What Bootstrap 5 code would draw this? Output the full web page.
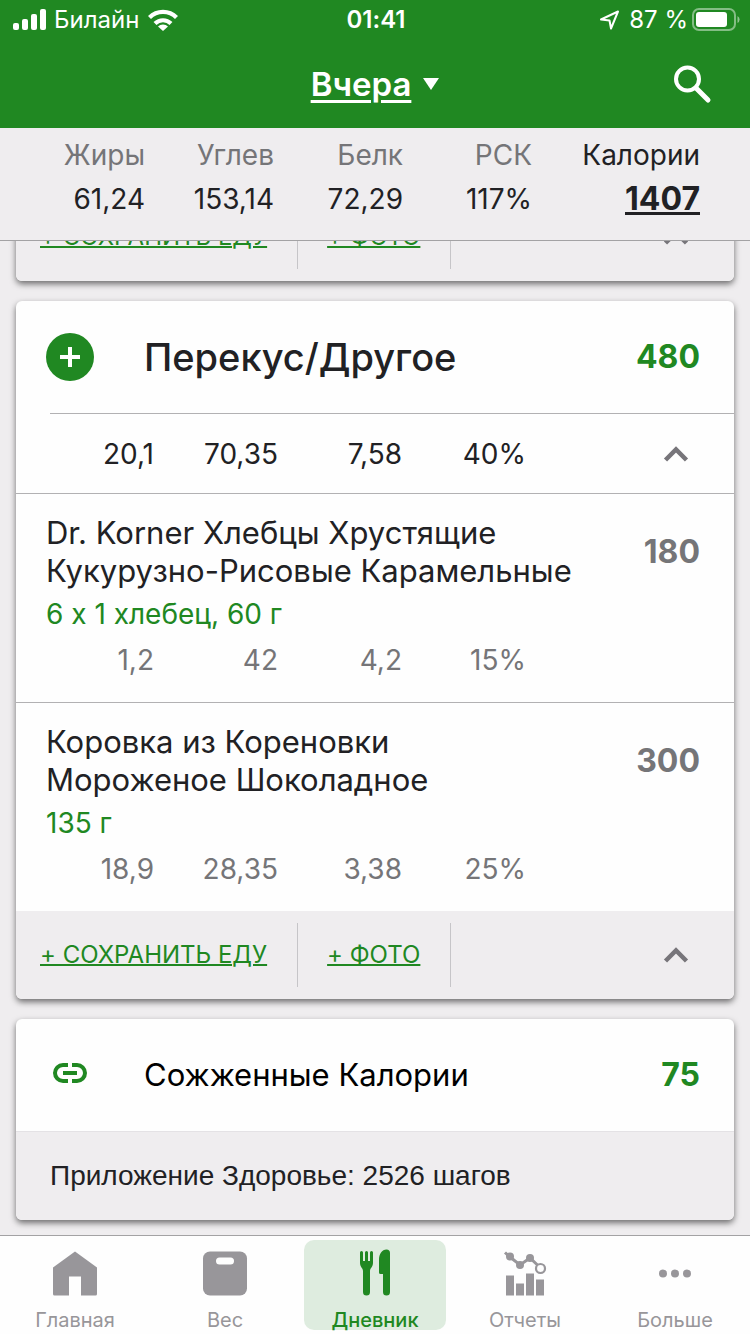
<!DOCTYPE html>
<html lang="ru">
<head>
<meta charset="utf-8">
<meta name="viewport" content="width=device-width, initial-scale=1">
<title>Дневник питания</title>
<link href="https://cdn.jsdelivr.net/npm/bootstrap@5.3.0/dist/css/bootstrap.min.css" rel="stylesheet">
<style>
  :root { --green: #208822; --ink: #212124; --muted: #757578; --page: #efedef; --rule: #b2b1b3; }
  body { font-family: Inter, "Noto Sans", sans-serif; font-variant-ligatures: no-contextual; background: var(--page); color: var(--ink); font-size: 28px; line-height: 36px; }
  svg { display: block; flex: none; }
  .app-bar { background: var(--green); color: #fff; }
  .status { height: 40px; padding: 0 10px 0 12px; font-size: 24px; line-height: 40px; }
  .side { flex: 1 1 0; }
  .bar-row { display: grid; grid-template-columns: 1fr auto 1fr; height: 88px; padding: 0 34px; }
  .day-btn, .icon-btn { background: none; border: 0; padding: 0; color: inherit; }
  .day-btn { font-size: 33px; line-height: 44px; font-weight: 600; gap: 12px; }
  .day-btn span, .total a { text-decoration: underline; text-decoration-thickness: 3px; text-underline-offset: 4px; }
  .totals { padding: 5px 50px 19px 16px; border-bottom: 1px solid #a3a2a4; }
  .totals table { width: 100%; table-layout: fixed; border-collapse: collapse; }
  .totals th, .totals td { height: 44px; padding: 0; text-align: right; font-weight: 400; }
  .totals th { color: var(--muted); }
  .totals th.total { color: var(--ink); width: 168px; }
  .total a { color: inherit; font-weight: 700; font-size: 32px; text-underline-offset: 2px; }
  main { scrollbar-width: none; }
  .feed { padding: 0 16px 14px; margin-top: -48px; gap: 20px; }
  .meal { background: #fefefe; border-radius: 6px; box-shadow: 0 3px 6px rgba(0,0,0,.55); }
  .meal-head { height: 112px; padding: 0 34px 0 30px; }
  .lead-icon { width: 98px; }
  .meal-head h2 { font-size: 38px; line-height: 44px; font-weight: 500; margin: 0; }
  .meal-head h2.plain { font-size: 31px; font-weight: 400; color: #000; }
  .kcal { font-size: 32px; font-weight: 700; }
  .kcal-green { color: var(--green); }
  .inset-rule { border-top: 1px solid var(--rule); margin-left: 34px; }
  .macros { display: grid; grid-template-columns: repeat(4, 124fr) 174fr; padding: 0 34px 0 14px; text-align: right; align-items: center; }
  .macros.sum { height: 79px; padding-right: 40px; grid-template-columns: repeat(4, 124fr) 168fr; }
  .item { border-top: 1px solid var(--rule); padding: 20px 0 18px; }
  .item-top { padding: 0 34px 0 30px; }
  .item h3 { font-size: 31px; line-height: 38px; font-weight: 400; margin: 0; }
  .item .kcal, .item .macros { color: var(--muted); }
  .portion { color: var(--green); padding: 4px 30px 0; line-height: 40px; }
  .item .macros { height: 48px; margin-top: 2px; }
  .meal-foot { background: var(--page); border-radius: 0 0 6px 6px; height: 88px; padding: 12px 40px 12px 24px; }
  .meal-foot a { color: var(--green); font-size: 24px; text-decoration-thickness: 2px; }
  .foot-cell { border-right: 1px solid #c6c5c8; height: 64px; padding-right: 30px; }
  .foot-cell + .foot-cell { padding-left: 29px; }
  .fold { color: #77757a; width: 36px; height: 36px; }
  .meal-note { font-family: "Liberation Sans", sans-serif; background: var(--page); border-radius: 0 0 6px 6px; border-top: 1px solid #e4e2e5; height: 89px; padding: 0 34px; }
  .tabs { background: #fefefe; border-top: 1px solid #a3a2a4; height: 99px; padding: 4px 0; z-index: 1; }
  .tabs a { flex: 1 1 0; margin: 0 4px; color: #98969a; text-decoration: none; font-size: 20px; line-height: 24px; padding-top: 8px; border-radius: 10px; gap: 12px; }
  .tabs a.on { background: #deecdf; color: var(--green); font-weight: 500; }
</style>
</head>
<body>
<div class="vh-100 d-flex flex-column">
  <header>
    <div class="app-bar">
      <div class="status d-flex align-items-center">
        <div class="side d-flex align-items-center gap-2">
          <svg width="34" height="22" viewBox="0 0 34 22" fill="#fff"><rect x="1" y="14" width="6" height="7" rx="2"/><rect x="10" y="10" width="6" height="11" rx="2"/><rect x="19" y="5" width="6" height="16" rx="2"/><rect x="28" y="0" width="6" height="21" rx="2"/></svg>
          <span>Билайн</span>
          <svg width="32" height="24" viewBox="0 0 32 24"><g fill="none" stroke="#fff" stroke-width="4.2"><path d="M2.500 9.500a19 19 0 0 1 27 0"/><path d="M8 15.500a11.500 11.500 0 0 1 16 0"/></g><path d="M16 23l-5-4.500a7 7 0 0 1 10 0z" fill="#fff"/></svg>
        </div>
        <span class="fw-semibold">01:41</span>
        <div class="side d-flex align-items-center justify-content-end gap-1">
          <svg width="22" height="22" viewBox="0 0 22 22" fill="none" stroke="#fff" stroke-width="2" stroke-linejoin="round"><path d="M2 10.500L19 2.500L12 19.500L10.500 11.500z"/></svg>
          <span class="ms-1">87 %</span>
          <svg width="48" height="24" viewBox="0 0 48 24"><rect x="1" y="1" width="42" height="21" rx="6" fill="none" stroke="#fff" stroke-opacity=".45" stroke-width="2"/><rect x="4" y="4" width="31" height="15" rx="3" fill="#fff"/><path d="M45.500 8a4 4 0 0 1 0 7z" fill="#fff" fill-opacity=".5"/></svg>
        </div>
      </div>
      <div class="bar-row align-items-center">
        <span></span>
        <button type="button" class="day-btn d-flex align-items-center"><span>Вчера</span>
          <svg width="16" height="12" viewBox="0 0 16 12" fill="#fff"><path d="M0 0h16L8 12z"/></svg></button>
        <button type="button" class="icon-btn ms-auto" aria-label="Поиск">
          <svg width="48" height="48" viewBox="0 0 48 48" fill="none" stroke="#fff"><circle cx="19.500" cy="19" r="11.500" stroke-width="4"/><path d="M28 28L40 40" stroke-width="5" stroke-linecap="round"/></svg></button>
      </div>
    </div>
    <div class="totals">
      <table>
        <thead><tr><th scope="col">Жиры</th><th scope="col">Углев</th><th scope="col">Белк</th><th scope="col">РСК</th><th scope="col" class="total">Калории</th></tr></thead>
        <tbody><tr><td>61,24</td><td>153,14</td><td>72,29</td><td>117%</td><td class="total"><a href="#">1407</a></td></tr></tbody>
      </table>
    </div>
  </header>

  <main class="flex-fill overflow-auto">
    <div class="feed d-flex flex-column">
      <section class="meal">
        <div class="meal-foot d-flex align-items-center">
          <div class="foot-cell d-flex align-items-center"><a href="#">+ СОХРАНИТЬ ЕДУ</a></div>
          <div class="foot-cell d-flex align-items-center"><a href="#">+ ФОТО</a></div>
          <button type="button" class="icon-btn fold ms-auto" aria-label="Свернуть"><svg width="36" height="36" viewBox="0 0 36 36" fill="none" stroke="currentColor" stroke-width="4.500"><path d="M7.500 24L18 13.500L28.500 24"/></svg></button>
        </div>
      </section>

      <section class="meal">
        <div class="meal-head d-flex align-items-center">
          <div class="lead-icon d-flex"><button type="button" class="icon-btn" aria-label="Добавить"><svg width="48" height="48" viewBox="0 0 48 48"><circle cx="24" cy="24" r="24" fill="#208822"/><path d="M14 24h20M24 14v20" stroke="#fff" stroke-width="4"/></svg></button></div>
          <h2>Перекус/Другое</h2>
          <span class="kcal kcal-green ms-auto">480</span>
        </div>
        <div class="inset-rule"></div>
        <div class="macros sum"><span>20,1</span><span>70,35</span><span>7,58</span><span>40%</span>
          <button type="button" class="icon-btn fold ms-auto" aria-label="Свернуть"><svg width="36" height="36" viewBox="0 0 36 36" fill="none" stroke="currentColor" stroke-width="4.500"><path d="M7.500 24L18 13.500L28.500 24"/></svg></button></div>
        <article class="item">
          <div class="item-top d-flex align-items-center justify-content-between"><h3>Dr. Korner Хлебцы Хрустящие<br>Кукурузно-Рисовые Карамельные</h3><span class="kcal">180</span></div>
          <div class="portion">6 x 1 хлебец, 60 г</div>
          <div class="macros"><span>1,2</span><span>42</span><span>4,2</span><span>15%</span></div>
        </article>
        <article class="item">
          <div class="item-top d-flex align-items-center justify-content-between"><h3>Коровка из Кореновки<br>Мороженое Шоколадное</h3><span class="kcal">300</span></div>
          <div class="portion">135 г</div>
          <div class="macros"><span>18,9</span><span>28,35</span><span>3,38</span><span>25%</span></div>
        </article>
        <div class="meal-foot d-flex align-items-center">
          <div class="foot-cell d-flex align-items-center"><a href="#">+ СОХРАНИТЬ ЕДУ</a></div>
          <div class="foot-cell d-flex align-items-center"><a href="#">+ ФОТО</a></div>
          <button type="button" class="icon-btn fold ms-auto" aria-label="Свернуть"><svg width="36" height="36" viewBox="0 0 36 36" fill="none" stroke="currentColor" stroke-width="4.500"><path d="M7.500 24L18 13.500L28.500 24"/></svg></button>
        </div>
      </section>

      <section class="meal">
        <div class="meal-head d-flex align-items-center">
          <div class="lead-icon"><svg width="48" height="48" viewBox="0 0 48 48" fill="none" stroke="#208822" stroke-width="4"><path d="M22 14h-5a8 8 0 0 0 0 16h5M26 14h5a8 8 0 0 1 0 16h-5M17 22h14"/></svg></div>
          <h2 class="plain">Сожженные Калории</h2>
          <span class="kcal kcal-green ms-auto">75</span>
        </div>
        <div class="meal-note d-flex align-items-center">Приложение Здоровье: 2526 шагов</div>
      </section>
    </div>
  </main>

  <nav class="tabs d-flex">
    <a href="#" class="d-flex flex-column align-items-center"><svg width="48" height="48" viewBox="0 0 48 48" fill="currentColor"><path d="M24 3.500L46 19.500V46a1.500 1.500 0 0 1-1.500 1.500H30V28.500H18V47.500H3.500A1.500 1.500 0 0 1 2 46V19.500z"/></svg>Главная</a>
    <a href="#" class="d-flex flex-column align-items-center"><svg width="48" height="48" viewBox="0 0 48 48"><rect x="2" y="3.500" width="44" height="44" rx="7" fill="currentColor"/><rect x="15" y="9.500" width="18" height="7" rx="3.500" fill="#fefefe"/></svg>Вес</a>
    <a href="#" class="on d-flex flex-column align-items-center" aria-current="page"><svg width="48" height="48" viewBox="0 0 48 48" fill="currentColor"><path d="M9 4.500a1.500 1.500 0 0 1 3 0V13h2V4.500a1.500 1.500 0 0 1 3 0V13h2V4.500a1.500 1.500 0 0 1 3 0V15c0 4-3 5-3 8 0 2 0 1 0 3v18a3.500 3.500 0 0 1-7 0V26c0-2 0-1 0-3 0-3-3-4-3-8z"/><path d="M28 12c0-6 3-10.500 7.500-10.500a3.500 3.500 0 0 1 3.500 3.500V44a3.500 3.500 0 0 1-7 0V26h-2.500a1.500 1.500 0 0 1-1.500-1.500z"/></svg>Дневник</a>
    <a href="#" class="d-flex flex-column align-items-center"><svg width="48" height="48" viewBox="0 0 48 48" fill="currentColor"><path d="M5 27.500h8v20H5zM15 35.500h8v12h-8zM25 25.500h8v22h-8zM35 31.500h8v16h-8z"/><path d="M4 4.500L9 9L19 17L29 10L37 17.500" fill="none" stroke="currentColor" stroke-width="3"/><circle cx="9" cy="8.500" r="4"/><circle cx="19" cy="17" r="4"/><circle cx="29" cy="10" r="4"/><circle cx="39.500" cy="20.500" r="4.500" fill="#fefefe" stroke="currentColor" stroke-width="2.200"/></svg>Отчеты</a>
    <a href="#" class="d-flex flex-column align-items-center"><svg width="48" height="48" viewBox="0 0 48 48" fill="currentColor"><circle cx="12" cy="25.500" r="4"/><circle cx="24" cy="25.500" r="4"/><circle cx="36" cy="25.500" r="4"/></svg>Больше</a>
  </nav>
</div>
<script src="https://cdn.jsdelivr.net/npm/bootstrap@5.3.0/dist/js/bootstrap.bundle.min.js"></script>
</body>
</html>
